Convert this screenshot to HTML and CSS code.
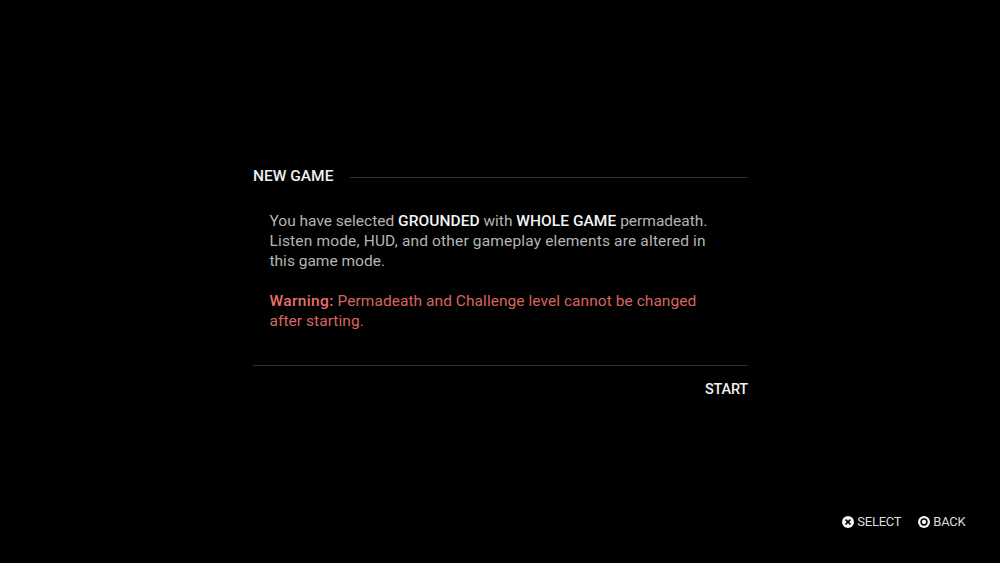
FILE: index.html
```html
<!DOCTYPE html>
<html lang="en">
<head>
  <meta charset="UTF-8">
  <meta name="viewport" content="width=device-width, initial-scale=1.0">
  <title>New Game</title>
  <link rel="stylesheet" href="styles.css">
</head>
<body>

  <main class="dialog">
    <header class="dialog-header">
      <h1 class="dialog-title">NEW GAME</h1>
      <div class="dialog-line"></div>
    </header>

    <div class="dialog-body">
      <p class="message">You have selected <b>GROUNDED</b> with <b>WHOLE GAME</b> permadeath.<br>
        <span class="line-two">Listen mode, HUD, and other gameplay elements are altered in</span><br>
        this game mode.</p>
      <p class="warning"><strong>Warning:</strong> Permadeath and Challenge level cannot be changed<br>
        after starting.</p>
    </div>

    <div class="dialog-actions">
      <a class="start">START</a>
    </div>
  </main>

  <!-- Controller button hints -->
  <footer class="hints">
    <div class="hint">
      <svg class="hint-icon" viewBox="0 0 12 12">
        <circle cx="6" cy="6" r="6" fill="#f4f4f4"/>
        <path d="M3.6 3.6l4.8 4.8M8.4 3.6l-4.8 4.8" stroke="#000" stroke-width="1.6"/>
      </svg>
      <span>SELECT</span>
    </div>
    <div class="hint">
      <svg class="hint-icon" viewBox="0 0 12 12">
        <circle cx="6" cy="6" r="6" fill="#f4f4f4"/>
        <circle cx="6" cy="6" r="2.9" fill="none" stroke="#000" stroke-width="1.5"/>
      </svg>
      <span>BACK</span>
    </div>
  </footer>

</body>
</html>
```
FILE: styles.css
```css
body {
  margin: 0;
  height: 563px;
  background: #000;
  color: #b4b4b4;
  font-family: Roboto, "Liberation Sans", sans-serif;
  font-size: 15.5px;
  line-height: 20px;
  display: flex;
  flex-direction: column;
  overflow: hidden;
}

.dialog {
  width: 495px;
  margin: 166px 0 0 253px;
}

.dialog-header {
  display: flex;
  align-items: center;
  gap: 17px;
}

.dialog-title {
  margin: 0;
  width: 80px;
  font-size: 15.5px;
  font-weight: 500;
  color: #f0f0f0;
  white-space: nowrap;
}

.dialog-line {
  flex: 1;
  height: 1px;
  margin-top: 2px;
  background: #303030;
}

.dialog-body {
  padding: 25px 0 34px 16.5px;
  border-bottom: 1px solid #303030;
  white-space: nowrap;
}

.message {
  margin: 0;
}

.message b {
  font-weight: 500;
  letter-spacing: 0.05px;
  color: #f4f4f4;
}

.line-two {
  letter-spacing: 0.16px;
}

.warning {
  margin: 20px 0 0;
  letter-spacing: 0.05px;
  color: #d8645f;
}

.warning strong {
  font-weight: 500;
  letter-spacing: 0.35px;
  color: #e8706a;
}

.dialog-actions {
  display: flex;
  justify-content: flex-end;
  padding-top: 14px;
}

.start {
  font-size: 14.5px;
  font-weight: 500;
  letter-spacing: -0.2px;
  color: #f0f0f0;
}

.hints {
  display: flex;
  justify-content: flex-end;
  gap: 16.5px;
  margin: auto 34.5px 31px 0;
}

.hint {
  display: flex;
  align-items: center;
  gap: 3.5px;
  font-size: 13px;
  letter-spacing: -0.25px;
  color: #dcdcdc;
}

.hint-icon {
  width: 12px;
  height: 12px;
}
```
